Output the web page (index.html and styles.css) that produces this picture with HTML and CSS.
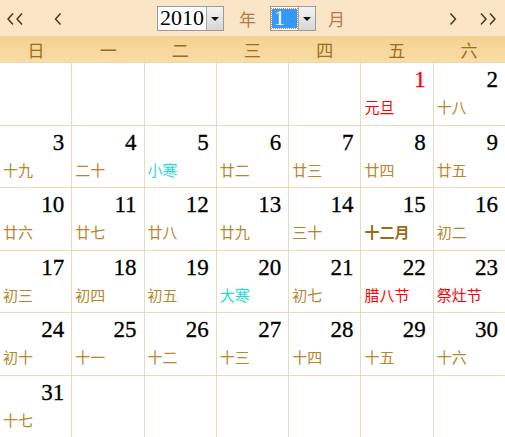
FILE: index.html
```html
<!DOCTYPE html>
<html lang="zh-CN">
<head>
<meta charset="utf-8">
<title>万年历</title>
<link rel="stylesheet" href="styles.css">
</head>
<body>
<div class="cal">
  <div class="topbar">
    <span class="nav nav-pp"><svg width="17" height="12" viewBox="0 0 17 12"><polyline points="6,0.5 1,6 6,11.5"/><polyline points="15,0.5 10,6 15,11.5"/></svg></span>
    <span class="nav nav-p"><svg width="8" height="12" viewBox="0 0 8 12"><polyline points="6.5,0.5 1.5,6 6.5,11.5"/></svg></span>
    <div class="picker">
      <div class="sel sel-year"><span class="sel-val">2010</span><span class="sel-btn"><i></i></span></div>
      <span class="unit">年</span>
      <div class="sel sel-month"><span class="sel-val"><b>1</b></span><span class="sel-btn"><i></i></span></div>
      <span class="unit unit-m">月</span>
    </div>
    <span class="nav nav-n"><svg width="8" height="12" viewBox="0 0 8 12"><polyline points="1.5,0.5 6.5,6 1.5,11.5"/></svg></span>
    <span class="nav nav-nn"><svg width="17" height="12" viewBox="0 0 17 12"><polyline points="2,0.5 7,6 2,11.5"/><polyline points="11,0.5 16,6 11,11.5"/></svg></span>
  </div>
  <div class="weekhead">
    <span>日</span><span>一</span><span>二</span><span>三</span><span>四</span><span>五</span><span>六</span>
  </div>
  <div class="grid">
    <div class="cell"></div><div class="cell"></div><div class="cell"></div><div class="cell"></div><div class="cell"></div>
    <div class="cell"><span class="d red">1</span><span class="l fest">元旦</span></div>
    <div class="cell"><span class="d">2</span><span class="l">十八</span></div>

    <div class="cell"><span class="d">3</span><span class="l">十九</span></div>
    <div class="cell"><span class="d">4</span><span class="l">二十</span></div>
    <div class="cell"><span class="d">5</span><span class="l term">小寒</span></div>
    <div class="cell"><span class="d">6</span><span class="l">廿二</span></div>
    <div class="cell"><span class="d">7</span><span class="l">廿三</span></div>
    <div class="cell"><span class="d">8</span><span class="l">廿四</span></div>
    <div class="cell"><span class="d">9</span><span class="l">廿五</span></div>

    <div class="cell"><span class="d">10</span><span class="l">廿六</span></div>
    <div class="cell"><span class="d">11</span><span class="l">廿七</span></div>
    <div class="cell"><span class="d">12</span><span class="l">廿八</span></div>
    <div class="cell"><span class="d">13</span><span class="l">廿九</span></div>
    <div class="cell"><span class="d">14</span><span class="l">三十</span></div>
    <div class="cell"><span class="d">15</span><span class="l month">十二月</span></div>
    <div class="cell"><span class="d">16</span><span class="l">初二</span></div>

    <div class="cell"><span class="d">17</span><span class="l">初三</span></div>
    <div class="cell"><span class="d">18</span><span class="l">初四</span></div>
    <div class="cell"><span class="d">19</span><span class="l">初五</span></div>
    <div class="cell"><span class="d">20</span><span class="l term">大寒</span></div>
    <div class="cell"><span class="d">21</span><span class="l">初七</span></div>
    <div class="cell"><span class="d">22</span><span class="l fest">腊八节</span></div>
    <div class="cell"><span class="d">23</span><span class="l fest">祭灶节</span></div>

    <div class="cell"><span class="d">24</span><span class="l">初十</span></div>
    <div class="cell"><span class="d">25</span><span class="l">十一</span></div>
    <div class="cell"><span class="d">26</span><span class="l">十二</span></div>
    <div class="cell"><span class="d">27</span><span class="l">十三</span></div>
    <div class="cell"><span class="d">28</span><span class="l">十四</span></div>
    <div class="cell"><span class="d">29</span><span class="l">十五</span></div>
    <div class="cell"><span class="d">30</span><span class="l">十六</span></div>

    <div class="cell"><span class="d">31</span><span class="l">十七</span></div>
    <div class="cell"></div><div class="cell"></div><div class="cell"></div><div class="cell"></div><div class="cell"></div><div class="cell"></div>
  </div>
</div>
</body>
</html>
```
FILE: styles.css
```css
html, body {
  margin: 0;
  padding: 0;
  background: #ffffff;
}
.cal {
  width: 505px;
  height: 437px;
  display: flex;
  flex-direction: column;
  font-family: "Noto Sans CJK SC", "DejaVu Sans", sans-serif;
}
.topbar {
  height: 36px;
  background: #fae6c6;
  border-bottom: 1px solid #f0d3a0;
  display: flex;
  align-items: center;
}
.nav {
  display: flex;
  align-items: center;
  margin-top: 2px;
}
.nav svg polyline {
  fill: none;
  stroke: #4a2e12;
  stroke-width: 1.4;
}
.nav-pp { margin-left: 7px; }
.nav-p { margin-left: 30px; }
.picker {
  display: flex;
  align-items: center;
  margin-left: 95px;
}
.nav-n { margin-left: auto; }
.nav-nn { margin-left: 22px; margin-right: 9px; }
.sel {
  height: 25px;
  display: flex;
  border: 1px solid #9a9a9a;
  background: #ffffff;
  box-sizing: border-box;
}
.sel-year { width: 67px; }
.sel-month { width: 46px; margin-left: 14px; }
.sel-val {
  flex: 1;
  font-family: "Liberation Serif", serif;
  font-size: 22px;
  line-height: 22px;
  color: #000;
  padding-left: 2px;
  display: flex;
  align-items: center;
}
.sel-month .sel-val {
  padding: 2px 1px 2px 1px;
}
.sel-month .sel-val b {
  font-weight: normal;
  flex: 1;
  align-self: stretch;
  background: #3399ff;
  color: #fff;
  outline: 1px dotted #e08a3a;
  display: flex;
  align-items: center;
  padding-left: 2px;
}
.sel-btn {
  width: 16px;
  background: linear-gradient(#f4f4f4, #d6d6d6);
  border-left: 1px solid #a8a8a8;
  display: flex;
  align-items: center;
  justify-content: center;
}
.sel-btn i {
  width: 0;
  height: 0;
  border-left: 4px solid transparent;
  border-right: 4px solid transparent;
  border-top: 4px solid #111;
  margin-top: 2px;
}
.unit {
  font-size: 17px;
  color: #b07a4c;
  margin-left: 15px;
  line-height: 1;
}
.unit-m { margin-left: 12px; }
.weekhead {
  height: 25px;
  display: grid;
  grid-template-columns: repeat(7, 1fr);
  background: linear-gradient(#f5d291, #f8dca8);
  border-bottom: 1px solid #efd8a8;
}
.weekhead span {
  text-align: center;
  font-size: 17px;
  line-height: 25px;
  color: #a06c18;
}
.grid {
  flex: 1;
  display: grid;
  grid-template-columns: repeat(7, 1fr);
  grid-template-rows: repeat(6, 1fr);
  gap: 1px;
  background: #ebdcb6;
}
.cell {
  background: #ffffff;
  display: flex;
  flex-direction: column;
  padding: 4px 7px 0 3px;
}
.d {
  align-self: flex-end;
  font-family: "Liberation Serif", serif;
  font-size: 23px;
  line-height: 25px;
  color: #000;
  -webkit-text-stroke: 0.3px #000;
}
.d.red { color: #ff0000; -webkit-text-stroke: 0.3px #ff0000; }
.l {
  margin-top: 6px;
  font-size: 15px;
  line-height: 18px;
  color: #b5862c;
}
.l.fest { color: #ff0000; }
.l.term { color: #1fdcd0; }
.l.month { color: #9a6a1c; font-weight: bold; }
```
